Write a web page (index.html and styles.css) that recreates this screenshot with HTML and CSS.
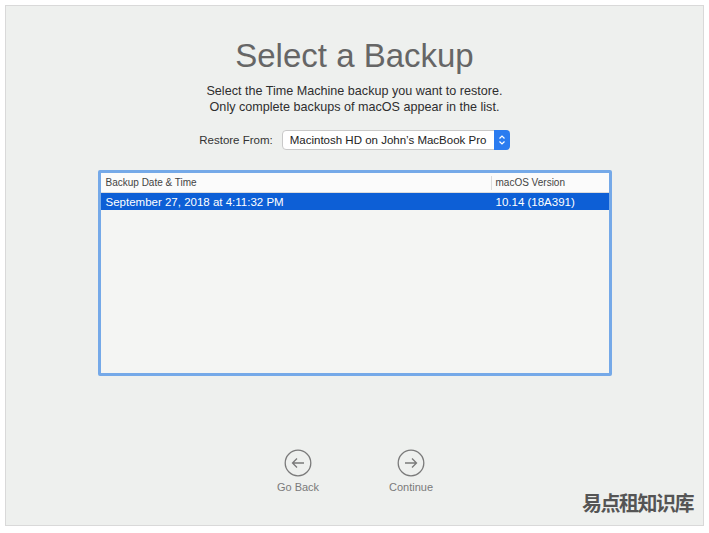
FILE: index.html
```html
<!doctype html>
<html lang="en">
<head>
<meta charset="utf-8">
<title>Select a Backup</title>
<link rel="stylesheet" href="styles.css">
</head>
<body>
  <div class="frame">
    <h1 class="title">Select a Backup</h1>
    <p class="lead">Select the Time Machine backup you want to restore.<br>Only complete backups of macOS appear in the list.</p>

    <div class="restore">
      <span class="restore-label">Restore From:</span>
      <div class="popup">
        <span class="popup-text">Macintosh HD on John’s MacBook Pro</span>
        <span class="stepper">
          <svg width="8" height="12" viewBox="0 0 8 12"><path d="M1.5 4.5 L4 2 L6.5 4.5 M1.5 7.5 L4 10 L6.5 7.5" fill="none" stroke="#fff" stroke-width="1.2"/></svg>
        </span>
      </div>
    </div>

    <div class="list">
      <div class="list-head">
        <div class="col-date">Backup Date &amp; Time</div>
        <div class="col-ver">macOS Version</div>
      </div>
      <div class="list-row selected">
        <div class="col-date">September 27, 2018 at 4:11:32 PM</div>
        <div class="col-ver">10.14 (18A391)</div>
      </div>
    </div>

    <div class="nav">
      <div class="nav-btn">
        <svg width="28" height="28" viewBox="0 0 28 28"><circle cx="14" cy="14" r="12.8" fill="none" stroke="#7a7a7a" stroke-width="1.3"/><path d="M20 14 H8.5 M13 9.5 L8.5 14 L13 18.5" fill="none" stroke="#7a7a7a" stroke-width="1.3"/></svg>
        <span>Go Back</span>
      </div>
      <div class="nav-btn">
        <svg width="28" height="28" viewBox="0 0 28 28"><circle cx="14" cy="14" r="12.8" fill="none" stroke="#7a7a7a" stroke-width="1.3"/><path d="M8 14 H19.5 M15 9.5 L19.5 14 L15 18.5" fill="none" stroke="#7a7a7a" stroke-width="1.3"/></svg>
        <span>Continue</span>
      </div>
    </div>

    <div class="mark">易点租知识库</div>
  </div>
</body>
</html>
```

FILE: styles.css
```css
* {
  box-sizing: border-box;
}

body {
  margin: 0;
  background: #fff;
  font-family: "Liberation Sans", Arial, sans-serif;
  color: #333;
}

.frame {
  position: relative;
  margin: 5px;
  width: 699px;
  height: 521px;
  border: 1px solid #d9d9d9;
  background: #eef0ee;
  display: flex;
  flex-direction: column;
  align-items: center;
  padding-top: 31px;
}

.title {
  margin: 0;
  font-size: 33px;
  line-height: 38px;
  font-weight: normal;
  color: #666;
}

.lead {
  margin: 8px 0 0;
  font-size: 12.6px;
  line-height: 16px;
  text-align: center;
  color: #2e2e2e;
}

.restore {
  margin-top: 15px;
  display: flex;
  align-items: center;
  gap: 9px;
  font-size: 11.5px;
}

.restore-label {
  color: #333;
}

.popup {
  width: 228px;
  height: 20px;
  display: flex;
  align-items: center;
  justify-content: space-between;
  background: #fff;
  border: 1px solid #c9c9c9;
  border-radius: 4px;
  padding-left: 7px;
  color: #222;
}

.stepper {
  width: 16px;
  height: 20px;
  margin-right: -1px;
  display: flex;
  align-items: center;
  justify-content: center;
  background: #2b7cf0;
  border-radius: 0 4px 4px 0;
}

.list {
  margin-top: 20px;
  width: 514px;
  height: 206px;
  border: 3px solid #75a9e8;
  border-radius: 2px;
  background: #f4f5f3;
}

.list-head,
.list-row {
  display: flex;
}

.list-head {
  height: 20px;
  align-items: center;
  background: #fbfbfb;
  border-bottom: 1px solid #dcdcdc;
  font-size: 10px;
  color: #444;
}

.list-head .col-date {
  border-right: 1px solid #dcdcdc;
  height: 14px;
  line-height: 14px;
}

.col-date {
  width: 391px;
  padding-left: 5px;
}

.col-ver {
  padding-left: 4px;
}

.list-row {
  height: 17px;
  align-items: center;
  font-size: 11.5px;
}

.selected {
  background: #0d5fd6;
  color: #fff;
}

.nav {
  margin-top: 73px;
  display: flex;
  gap: 43px;
}

.nav-btn {
  width: 70px;
  display: flex;
  flex-direction: column;
  align-items: center;
  gap: 4px;
  font-size: 11px;
  color: #7a7a7a;
}

.mark {
  position: absolute;
  right: 10px;
  bottom: 9px;
  font-family: "Noto Sans CJK SC", sans-serif;
  font-size: 20px;
  font-weight: bold;
  letter-spacing: -1.5px;
  color: #555;
  line-height: 26px;
}
```
